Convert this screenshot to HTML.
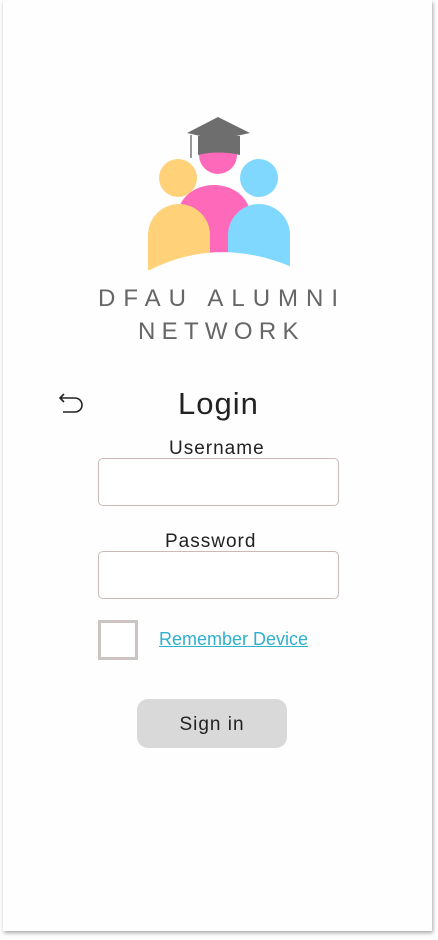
<!DOCTYPE html>
<html><head><style>
body{margin:0;width:438px;height:940px;background:#fff;font-family:"Liberation Sans",sans-serif;position:relative;overflow:hidden}
.card{position:absolute;left:3px;top:0;width:429px;height:931px;background:#fefefe;box-shadow:1px 2px 4px rgba(0,0,0,.35)}
.t{position:absolute;white-space:nowrap;color:#222}
.in{position:absolute;left:98px;width:239px;height:46px;border:1px solid #cdb8b8;border-radius:5px;background:#fff}
</style></head><body>
<div class="card"></div>
<svg style="position:absolute;left:0;top:0" width="438" height="360">
<circle cx="218" cy="155" r="19" fill="#ff69b9"/>
<circle cx="178" cy="178" r="19" fill="#ffd27a"/>
<circle cx="259" cy="178" r="19" fill="#80d8ff"/>
<path d="M178 260 V215 A36 30 0 0 1 250 215 V260Z" fill="#ff69b9"/>
<path d="M148 270 V235 A31 31 0 0 1 210 235 V270Z" fill="#ffd27a"/>
<path d="M228 270 V235 A31 31 0 0 1 290 235 V270Z" fill="#80d8ff"/>
<path d="M146 272 Q215 235 292 267 L292 285 L146 285Z" fill="#fefefe"/>
<path d="M187 133 L218 117 L250 133 L218 140Z" fill="#6e6e6e"/>
<path d="M198 136 V155 Q218 150 240 155 V136Z" fill="#6e6e6e"/>
<line x1="191" y1="135" x2="191" y2="158" stroke="#777" stroke-width="1.5"/>
</svg>
<div class="t" style="left:98px;top:285px;font-size:24px;letter-spacing:8px;color:#666">DFAU ALUMNI</div>
<div class="t" style="left:138px;top:318px;font-size:24px;letter-spacing:6.3px;color:#666">NETWORK</div>
<svg style="position:absolute;left:58px;top:391px" width="30" height="26" viewBox="0 0 30 26"><path d="M6 3 L2 7 L6 11 M2 7 H17 A6 6 0 0 1 17 21 H5" fill="none" stroke="#222" stroke-width="1.6"/></svg>
<div class="t" style="left:178px;top:386px;font-size:31px;letter-spacing:1px">Login</div>
<div class="t" style="left:169px;top:438px;font-size:19px;letter-spacing:1px">Username</div>
<div class="in" style="top:458px"></div>
<div class="t" style="left:165px;top:531px;font-size:19px;letter-spacing:1px">Password</div>
<div class="in" style="top:551px"></div>
<div style="position:absolute;left:98px;top:620px;width:34px;height:34px;border:3px solid #cdc3c3;background:#fff"></div>
<div class="t" style="left:159px;top:629px;font-size:18px;color:#2fb0cc;text-decoration:underline">Remember Device</div>
<div style="position:absolute;left:137px;top:699px;width:150px;height:49px;border-radius:11px;background:#d9d9d9;text-align:center;line-height:52px;font-size:19px;letter-spacing:1px;color:#222">Sign in</div>
</body></html>
